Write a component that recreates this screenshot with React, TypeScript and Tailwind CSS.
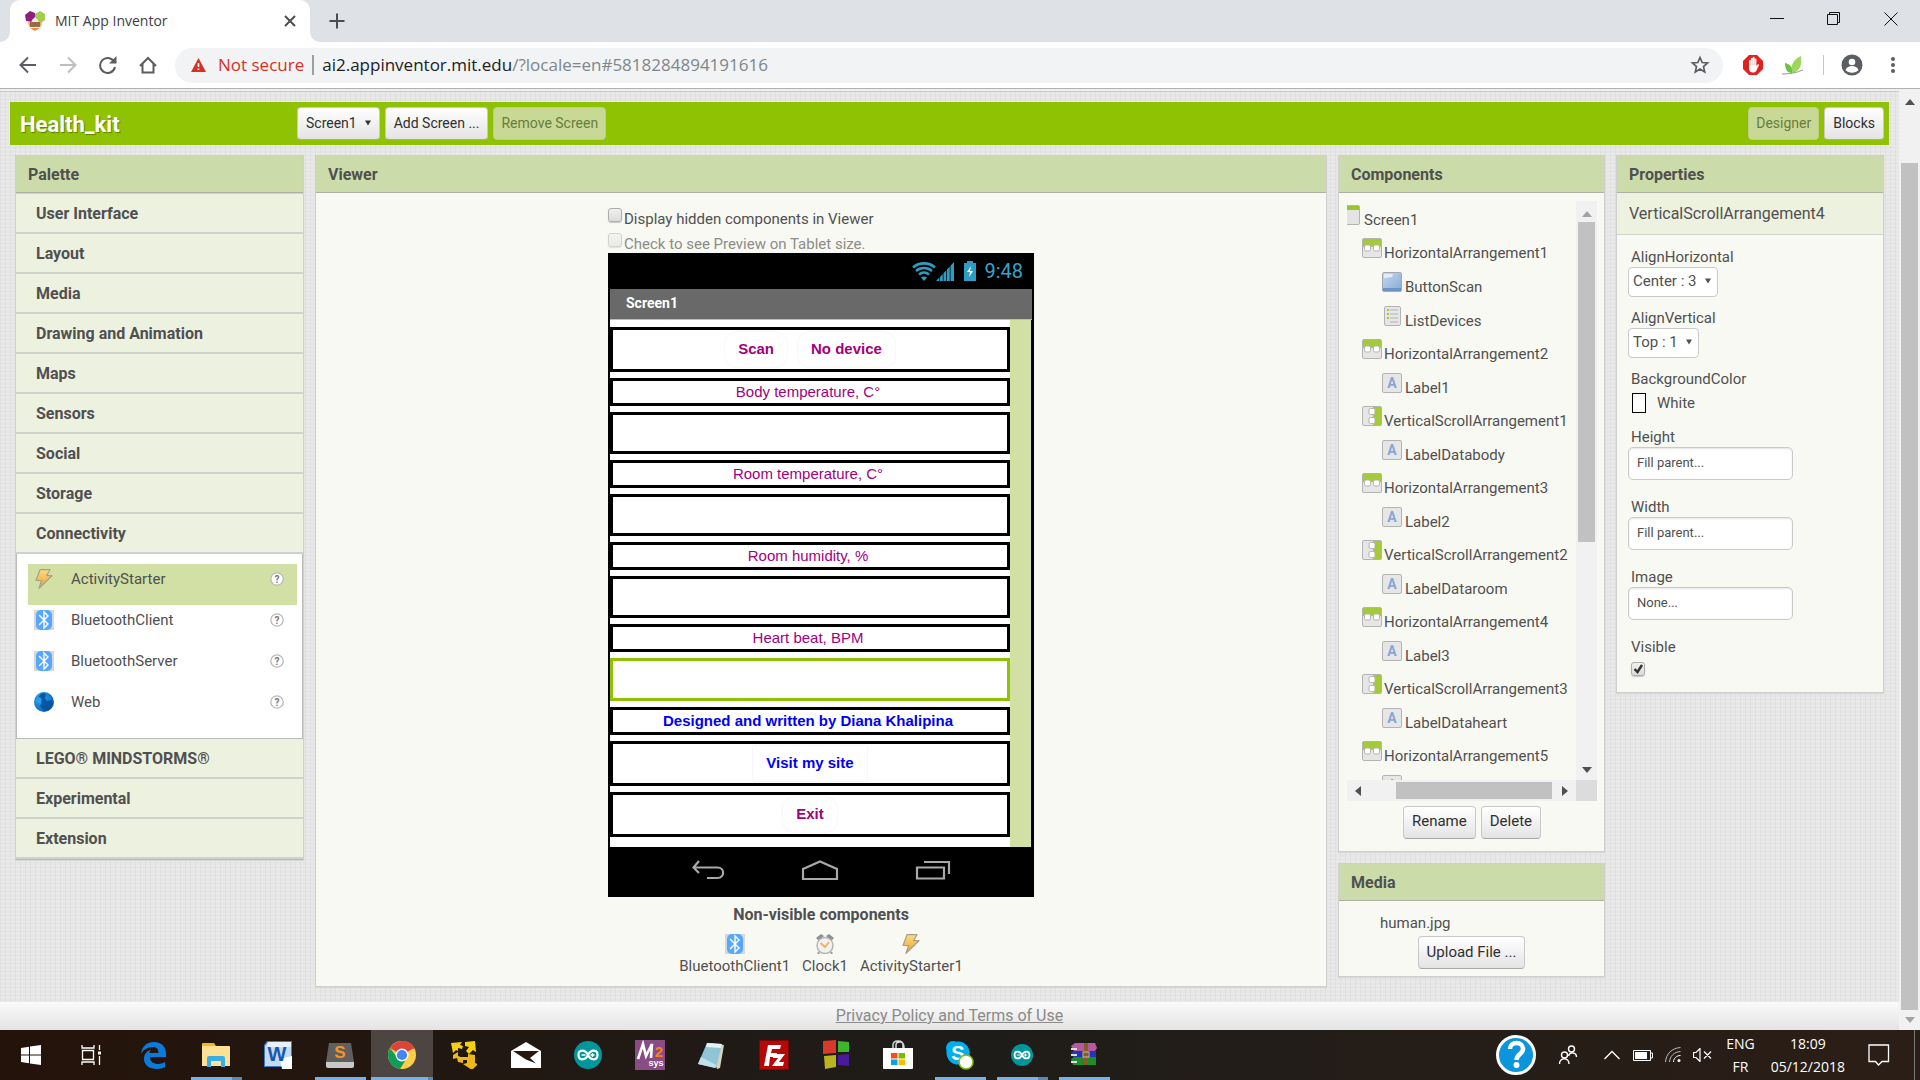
import type { ReactNode } from "react";

const categoriesTop = [
  "User Interface",
  "Layout",
  "Media",
  "Drawing and Animation",
  "Maps",
  "Sensors",
  "Social",
  "Storage",
  "Connectivity",
];

const categoriesBottom = ["LEGO® MINDSTORMS®", "Experimental", "Extension"];

/* ---------- component icons ---------- */

const BoltIcon = () => (
  <svg width="20" height="20" viewBox="0 0 20 20">
    <defs>
      <linearGradient id="bolt" x1="0" y1="0" x2="0" y2="1">
        <stop offset="0" stopColor="#fbdc86" />
        <stop offset="1" stopColor="#f0a024" />
      </linearGradient>
    </defs>
    <path
      d="M6 0.700h10l-3.500 6H18L5 19.300l2.500-7.800H2z"
      fill="url(#bolt)"
      stroke="#a9a08a"
      strokeWidth="1.200"
      strokeLinejoin="round"
    />
  </svg>
);

const BluetoothIcon = () => (
  <svg width="20" height="20" viewBox="0 0 20 20">
    <rect width="20" height="20" fill="#d8d8d8" />
    <rect x="2" width="16" height="20" rx="5" fill="#55a7ff" />
    <path
      d="M5 5l9 9-4 4V2l4 4-9 9"
      fill="none"
      stroke="#fff"
      strokeWidth="1.400"
    />
  </svg>
);

const GlobeIcon = () => (
  <svg width="20" height="20" viewBox="0 0 20 20">
    <defs>
      <radialGradient id="globe" cx="0.350" cy="0.350" r="0.700">
        <stop offset="0" stopColor="#35a8f2" />
        <stop offset="1" stopColor="#0763b8" />
      </radialGradient>
    </defs>
    <circle cx="10" cy="10" r="10" fill="url(#globe)" />
    <path
      d="M8 1l4 1-1 4 2 3 5-1 1 4-4 6-5 1-4-5 2-4-4-2 1-4z"
      fill="#044a98"
      opacity="0.800"
    />
    <path d="M3 6l3-1 2 3-2 3-4-1z" fill="#2f9ae8" />
  </svg>
);

const ClockIcon = () => (
  <svg width="20" height="20" viewBox="0 0 20 20">
    <path d="M1 4l5-4 3 2-5 5zM19 4l-5-4-3 2 5 5z" fill="#8f8f8f" />
    <path d="M4 18l-1 2M16 18l1 2" stroke="#999" strokeWidth="2" />
    <circle cx="10" cy="11.500" r="8" fill="#f1f1f1" stroke="#b5b5b5" strokeWidth="1.500" />
    <path d="M5.500 9l4.500 4 4-5" fill="none" stroke="#f0b45a" strokeWidth="2" />
  </svg>
);

const HelpIcon = () => (
  <svg width="14" height="14" viewBox="0 0 14 14">
    <circle cx="7" cy="7" r="6.200" fill="#fff" stroke="#b9b9b9" strokeWidth="1.300" />
    <text
      x="7"
      y="10.500"
      textAnchor="middle"
      fontSize="10"
      fontWeight="700"
      fontFamily="Roboto, sans-serif"
      fill="#777"
    >
      ?
    </text>
  </svg>
);

const IconFrame = ({ children, x = 0, width = 20 }: { children: ReactNode; x?: number; width?: number }) => (
  <svg width="20" height="20" viewBox="0 0 20 20" className="shrink-0">
    <rect x={x + 0.5} y="0.500" width={width - 1} height="19" rx="1.500" fill="#e6e6e6" stroke="#b3b3b3" />
    {children}
  </svg>
);

const HorizontalIcon = () => (
  <IconFrame>
    <rect x="1" y="1" width="18" height="8" fill="#a4c93a" />
    <rect x="2.500" y="7" width="6" height="6" rx="1.500" fill="#fff" stroke="#b5b5b5" />
    <rect x="11.500" y="7" width="6" height="6" rx="1.500" fill="#fff" stroke="#b5b5b5" />
  </IconFrame>
);

const VerticalIcon = () => (
  <IconFrame>
    <rect x="11" y="1" width="8" height="18" fill="#a4c93a" />
    <rect x="7" y="2.500" width="6" height="6" rx="1.500" fill="#fff" stroke="#b5b5b5" />
    <rect x="7" y="11.500" width="6" height="6" rx="1.500" fill="#fff" stroke="#b5b5b5" />
  </IconFrame>
);

const ButtonIcon = () => (
  <svg width="20" height="20" viewBox="0 0 20 20" className="shrink-0">
    <defs>
      <linearGradient id="btn" x1="0" y1="0" x2="1" y2="1">
        <stop offset="0" stopColor="#c5d8ef" />
        <stop offset="1" stopColor="#86a9d6" />
      </linearGradient>
    </defs>
    <rect x="0.500" y="0.500" width="19" height="19" rx="1.500" fill="url(#btn)" stroke="#a3a9b3" />
    <rect x="1" y="16" width="18" height="3" fill="#6f93c4" />
    <path d="M2 2h9l-1 3-8 1z" fill="#e4eefa" />
  </svg>
);

const ListIcon = () => (
  <IconFrame x={2} width={17}>
    <path d="M5 4h2M5 8h2M5 12h2" stroke="#a4c93a" strokeWidth="2" />
    <path d="M8 4h8M8 8h8M8 12h8M8 16h8" stroke="#b5b5b5" />
  </IconFrame>
);

const LabelIcon = () => (
  <IconFrame>
    <text
      x="10"
      y="15"
      textAnchor="middle"
      fontSize="14"
      fontWeight="700"
      fontFamily="Roboto, sans-serif"
      fill="#86a6d8"
    >
      A
    </text>
  </IconFrame>
);

const ScreenIcon = () => (
  <svg width="13" height="20" viewBox="0 0 13 20" className="shrink-0">
    <path d="M0 0.500h11a1.500 1.500 0 0 1 1.500 1.500v16a1.500 1.500 0 0 1-1.500 1.500H0" fill="#e4e4e4" stroke="#b3b3b3" />
    <rect y="1" width="12" height="4" fill="#9dc42f" />
  </svg>
);

/* ---------- shared pieces ---------- */

const Panel = ({ title, className, children }: { title: string; className?: string; children: ReactNode }) => (
  <section className={`border border-[#cfcfcf] bg-[#f8f9f3] shadow-[0_1px_1px_#d8d8d8] ${className ?? ""}`}>
    <h2 className="flex h-[37px] items-center border-b border-[#adb0a5] bg-[#cbdcaa] pt-0.5 pl-3 text-base font-bold">
      {title}
    </h2>
    {children}
  </section>
);

const btn =
  "h-[33px] rounded-[4px] border border-[#c9c9c9] border-b-[#a9a9a9] bg-linear-to-b from-white to-[#e4e4e4] px-2 pb-0.5 text-[#2f2f2f]";
const btnDisabled =
  "h-[33px] rounded-[4px] border border-[#bccf86] bg-[#c7d995] px-[7px] pb-0.5 text-[#6a7c3c]";

const Arrow = ({ d, color = "#505050" }: { d: string; color?: string }) => (
  <svg width="10" height="10" viewBox="0 0 10 10" className="shrink-0">
    <path d={d} fill={color} />
  </svg>
);
const UP = "M5 2l5 6H0z";
const DOWN = "M0 2h10L5 8z";
const LEFT = "M8 0v10L2 5z";
const RIGHT = "M2 0v10l6-5z";

/* ---------- browser ---------- */

const Browser = () => (
  <header className="font-['Open_Sans',sans-serif]">
    <div className="flex h-[42px] bg-[#dee1e6]">
      <div className="flex w-[10px] items-end bg-white">
        <div className="h-full w-full rounded-br-[10px] bg-[#dee1e6]" />
      </div>
      <div className="bg-[#dee1e6]">
        <div className="flex h-full w-[300px] items-center rounded-t-[10px] bg-white pr-[10px] pl-[15px]">
          <svg width="20" height="20" viewBox="0 0 20 20">
            <path d="M5 0l5 2v6l-3 3-6-1-1-6z" fill="#8e1f7d" />
            <path d="M15 0l5 3v6l-4 3-6-3V3z" fill="#a2cf4b" />
            <path d="M7 9l3-3 3 3 1 3H6z" fill="#f3ece8" />
            <path d="M3 10l3 2-2 5zM17 10l-3 2 2 5z" fill="#f3a56a" />
            <rect x="5" y="11" width="10" height="5" fill="#9c6a45" />
            <path d="M5 17h10l-5 3z" fill="#ef8b3c" />
          </svg>
          <span className="ml-[10px] flex-1 text-sm text-[#3c4043]">MIT App Inventor</span>
          <button aria-label="Close tab" className="p-1">
            <svg width="12" height="12" viewBox="0 0 12 12">
              <path d="M1 1l10 10M11 1L1 11" stroke="#4a4d51" strokeWidth="2" />
            </svg>
          </button>
        </div>
      </div>
      <div className="w-[10px] bg-white">
        <div className="h-full w-full rounded-bl-[10px] bg-[#dee1e6]" />
      </div>
      <button aria-label="New tab" className="ml-1 px-1">
        <svg width="18" height="18" viewBox="0 0 18 18">
          <path d="M9 1.500v15M1.500 9h15" stroke="#4a4d51" strokeWidth="2" />
        </svg>
      </button>
      <div className="flex-1" />
      <div className="flex h-[37px] items-center gap-[43px] pr-[22px]">
        <button aria-label="Minimize">
          <svg width="14" height="14" viewBox="0 0 14 14">
            <path d="M0 6.500h14" stroke="#111" />
          </svg>
        </button>
        <button aria-label="Restore">
          <svg width="14" height="14" viewBox="0 0 14 14" fill="none" stroke="#111">
            <path d="M0.500 2.500h10v10h-10zM2.500 2.500v-2h10v10h-2" />
          </svg>
        </button>
        <button aria-label="Close">
          <svg width="14" height="14" viewBox="0 0 14 14">
            <path d="M0.500 0.500l13 13M13.500 0.500l-13 13" stroke="#111" />
          </svg>
        </button>
      </div>
    </div>
    <div className="flex h-[47px] items-center border-b border-[#b0b1b3] bg-white pr-[25px] pl-[19px]">
      <div className="flex w-[156px] items-center gap-[22px]">
        <button aria-label="Back">
          <svg width="18" height="18" viewBox="0 0 18 18" fill="none" stroke="#5a5d61" strokeWidth="2">
            <path d="M17 9H2M9 1.500L1.500 9 9 16.500" />
          </svg>
        </button>
        <button aria-label="Forward">
          <svg width="18" height="18" viewBox="0 0 18 18" fill="none" stroke="#bcbec1" strokeWidth="2">
            <path d="M1 9h15M9 1.500L16.500 9 9 16.500" />
          </svg>
        </button>
        <button aria-label="Reload">
          <svg width="18" height="18" viewBox="0 0 18 18">
            <path d="M15 5.500A7.500 7.500 0 1 0 16 11" fill="none" stroke="#5a5d61" strokeWidth="2" />
            <path d="M17.500 0v7.500H10z" fill="#5a5d61" />
          </svg>
        </button>
        <button aria-label="Home">
          <svg width="18" height="18" viewBox="0 0 18 18" fill="none" stroke="#5a5d61" strokeWidth="2">
            <path d="M1 10L9 2l8 8M3.500 8v8.500h11V8" />
          </svg>
        </button>
      </div>
      <div className="flex h-[35px] flex-1 items-center rounded-full bg-[#f1f3f4] pr-[13px] pl-4 text-[17px]">
        <svg width="15" height="14" viewBox="0 0 15 14">
          <path d="M7.500 0L15 14H0z" fill="#d93025" />
          <path d="M7.500 5v4M7.500 10.500v1.500" stroke="#fff" strokeWidth="1.600" />
        </svg>
        <span className="ml-3 text-[#d93025]">Not secure</span>
        <span className="mx-2 h-5 w-0.5 bg-[#9aa0a6]" />
        <span className="text-[#202124]">
          ai2.appinventor.mit.edu<span className="text-[#80868b]">/?locale=en#5818284894191616</span>
        </span>
        <button aria-label="Bookmark this page" className="ml-auto">
          <svg width="20" height="20" viewBox="0 0 20 20" fill="none" stroke="#5a5d61" strokeWidth="1.700">
            <path d="M10 2.500l2.200 5 5.400.500-4.100 3.600 1.200 5.300L10 14.100l-4.700 2.800 1.200-5.300L2.400 8l5.400-.500z" />
          </svg>
        </button>
      </div>
      <svg width="20" height="20" viewBox="0 0 20 20" className="ml-5">
        <path d="M6 0h8l6 6v8l-6 6H6l-6-6V6z" fill="#e2211c" />
        <path
          d="M6 12V5.500a1 1 0 0 1 1.800 0V3.500a1 1 0 0 1 1.900 0v-1a1 1 0 0 1 1.900 0V4a1 1 0 0 1 1.800 0v7l1.200-1.500c.800-.800 1.700 0 1.200 1L13.500 15.500c-.800 1.500-1.800 2-3.500 2-2.500 0-4-1.500-4-4z"
          fill="#fff"
        />
        <path d="M7.900 5v5M9.700 4v6M11.600 4v6" stroke="#e8a09e" strokeWidth="0.500" />
      </svg>
      <svg width="22" height="20" viewBox="0 0 22 20" className="ml-[19px]">
        <path d="M19 1c1 8 0 15-9 17C8 10 12 4 19 1z" fill="#9bd85c" />
        <path d="M3 8c5 1 8 4 7 10-5 0-7-4-7-10z" fill="#6fc23f" />
        <path d="M0 19c6 0 14-1 21-4" fill="none" stroke="#999" />
      </svg>
      <span className="ml-[19px] h-5 w-px bg-[#c6c8cb]" />
      <svg width="22" height="22" viewBox="0 0 22 22" className="ml-[17px]">
        <circle cx="11" cy="11" r="10.500" fill="#5a5d61" />
        <circle cx="11" cy="8" r="3.300" fill="#fff" />
        <path d="M4.500 16c1-3 4-4 6.500-4s5.500 1 6.500 4c-3 3.500-10 3.500-13 0z" fill="#fff" />
      </svg>
      <button aria-label="Menu" className="ml-7">
        <svg width="4" height="18" viewBox="0 0 4 18" fill="#5a5d61">
          <circle cx="2" cy="3" r="2" />
          <circle cx="2" cy="9" r="2" />
          <circle cx="2" cy="15" r="2" />
        </svg>
      </button>
    </div>
  </header>
);

/* ---------- panels ---------- */

const Category = ({ name }: { name: string }) => (
  <button className="flex h-10 w-full items-center border-b-2 border-[#cfd1cb] bg-[#edf1e0] pt-0.5 pl-5 text-base font-bold">
    {name}
  </button>
);

const drawer = [
  { name: "ActivityStarter", icon: <BoltIcon />, active: true },
  { name: "BluetoothClient", icon: <BluetoothIcon /> },
  { name: "BluetoothServer", icon: <BluetoothIcon /> },
  { name: "Web", icon: <GlobeIcon /> },
];

const Palette = () => (
  <Panel title="Palette" className="w-[289px] shrink-0 border-b-[#b9bab5]">
    <div className="border-t border-[#cfd1cb]">
      {categoriesTop.map((c) => (
        <Category key={c} name={c} />
      ))}
      <ul className="border-x border-b border-[#bbbbbb] bg-white py-[10px] pr-[5px] pl-[11px] text-[15px]">
        {drawer.map((d) => (
          <li key={d.name} className={d.active ? "h-[41px] bg-[#d2e0a6] pt-[5px]" : "h-[41px] pt-[5px]"}>
            <div className="flex h-5 items-center pr-[13px] pl-[6px]">
              {d.icon}
              <span className="ml-[17px] flex-1">{d.name}</span>
              <HelpIcon />
            </div>
          </li>
        ))}
      </ul>
      {categoriesBottom.map((c) => (
        <Category key={c} name={c} />
      ))}
    </div>
  </Panel>
);

const Box = ({ className, children }: { className?: string; children?: ReactNode }) => (
  <div className={`flex items-center justify-center border-[3px] ${className ?? "border-black"}`}>{children}</div>
);

const Reading = ({ label, selected }: { label: string; selected?: boolean }) => (
  <>
    <Box className="h-7 border-black pr-1">{label}</Box>
    <Box className={selected ? "h-[43px] border-[#8fc202]" : "h-[42px] border-black"} />
  </>
);

const phoneBtn = "h-[35px] px-[13px] font-bold shadow-[0_0_2px_#e6e6e6]";

const Phone = () => (
  <div className="w-[426px] bg-black">
    <div className="flex h-9 items-center justify-end pr-[11px] text-[#33a5cf]">
      <svg width="24" height="19" viewBox="0 0 24 19" fill="none" stroke="#2f9cc4" strokeWidth="2.600">
        <path d="M1 5.500C7 0 17 0 23 5.500M4 9C8.500 5 15.500 5 20 9M7 12.500c3-2.500 7-2.500 10 0" />
        <path d="M9 15.500c2-1.500 4-1.500 6 0l-3 3.500z" fill="#2f9cc4" stroke="none" />
      </svg>
      <svg width="18" height="19" viewBox="0 0 18 19" fill="#2f9cc4">
        <path d="M0 19l3.300-3.500V19zM4 15l2.800-3v7H4zM7.500 11.200l2.800-3V19H7.500zM11 7.500l2.800-3V19H11zM14.500 3.700L18 0v19h-3.500z" />
      </svg>
      <svg width="12" height="20" viewBox="0 0 12 20" className="ml-[10px]">
        <path d="M3 0h6v2h3v18H0V2h3z" fill="#2f9cc4" />
        <path d="M7 5l-4 6h3l-1 5 4-6H6z" fill="#fff" />
      </svg>
      <span className="ml-2 text-[20px]">9:48</span>
    </div>
    <div className="mx-0.5 flex h-[31px] items-center border-b border-[#bdbdbd] bg-[#696969] pb-0.5 pl-4 text-sm font-bold text-white">
      Screen1
    </div>
    <div className="mr-[3px] ml-0.5 flex bg-[#d2e0a6]">
      <div className="flex flex-1 flex-col gap-[6px] bg-white pt-[7px] pb-[10px] font-['Liberation_Sans',sans-serif] text-[15px] text-[#a3007c]">
        <Box className="h-[45px] gap-[11px] border-black">
          <button className={`${phoneBtn} rounded-[12px]`}>Scan</button>
          <button className={`${phoneBtn} rounded-[12px]`}>No device</button>
        </Box>
        <Reading label="Body temperature, C°" />
        <Reading label="Room temperature, C°" />
        <Reading label="Room humidity, %" />
        <Reading label="Heart beat, BPM" selected />
        <Box className="h-7 border-black pr-1 font-bold text-[#0000f5]">Designed and written by Diana Khalipina</Box>
        <Box className="h-[45px] border-black">
          <button className={`${phoneBtn} text-[#0000f5]`}>Visit my site</button>
        </Box>
        <Box className="h-[45px] border-black">
          <button className={`${phoneBtn} rounded-[12px]`}>Exit</button>
        </Box>
      </div>
      <div className="w-[21px]" />
    </div>
    <div className="flex h-[50px] items-center justify-center gap-[76px] pb-1">
      <svg width="34" height="20" viewBox="0 0 34 20" fill="none" stroke="#a9a9a9" strokeWidth="2.200">
        <path d="M8 1L2.500 7.500 8 13M2.500 7.500h24c7.500 0 7.500 10.500 0 10.500H16" />
      </svg>
      <svg width="38" height="20" viewBox="0 0 38 20" fill="none" stroke="#a9a9a9" strokeWidth="2.200">
        <path d="M2 9l17-7.500L36 9v10H2z" />
      </svg>
      <svg width="36" height="20" viewBox="0 0 36 20" fill="none" stroke="#a9a9a9" strokeWidth="2.200">
        <path d="M2 7.500h27v11H2zM9 2h25v12" />
      </svg>
    </div>
  </div>
);

const hidden = [
  { name: "BluetoothClient1", icon: <BluetoothIcon /> },
  { name: "Clock1", icon: <ClockIcon /> },
  { name: "ActivityStarter1", icon: <BoltIcon /> },
];

const check =
  "size-[14px] appearance-none rounded-[3px] border border-[#adadad] bg-linear-to-b from-[#f0f0f0] to-[#dcdcdc] shadow-[0_1px_1px_#c9c9c9]";

const Viewer = () => (
  <Panel title="Viewer" className="min-w-0 flex-1">
    <div className="flex flex-col items-center pt-[10px] pb-2 text-[15px]">
      <div className="w-[426px]">
        <label className="flex h-[25px] gap-0.5 pt-[5px] leading-[22px]">
          <input type="checkbox" className={check} />
          Display hidden components in Viewer
        </label>
        <label className="flex h-[25px] gap-0.5 pt-[5px] leading-[22px] text-[#8c8c8a]">
          <input type="checkbox" disabled className={`${check} opacity-50`} />
          Check to see Preview on Tablet size.
        </label>
      </div>
      <Phone />
      <h3 className="mt-2 text-base leading-5 font-bold">Non-visible components</h3>
      <ul className="mt-[9px] flex gap-3">
        {hidden.map((h) => (
          <li key={h.name} className="flex flex-col items-center leading-6">
            {h.icon}
            {h.name}
          </li>
        ))}
      </ul>
    </div>
  </Panel>
);

const tree = [
  {
    name: "HorizontalArrangement1",
    icon: <HorizontalIcon />,
    items: [
      { name: "ButtonScan", icon: <ButtonIcon /> },
      { name: "ListDevices", icon: <ListIcon /> },
    ],
  },
  { name: "HorizontalArrangement2", icon: <HorizontalIcon />, items: [{ name: "Label1", icon: <LabelIcon /> }] },
  { name: "VerticalScrollArrangement1", icon: <VerticalIcon />, items: [{ name: "LabelDatabody", icon: <LabelIcon /> }] },
  { name: "HorizontalArrangement3", icon: <HorizontalIcon />, items: [{ name: "Label2", icon: <LabelIcon /> }] },
  { name: "VerticalScrollArrangement2", icon: <VerticalIcon />, items: [{ name: "LabelDataroom", icon: <LabelIcon /> }] },
  { name: "HorizontalArrangement4", icon: <HorizontalIcon />, items: [{ name: "Label3", icon: <LabelIcon /> }] },
  { name: "VerticalScrollArrangement3", icon: <VerticalIcon />, items: [{ name: "LabelDataheart", icon: <LabelIcon /> }] },
  { name: "HorizontalArrangement5", icon: <HorizontalIcon />, items: [{ name: "", icon: <LabelIcon /> }] },
];

const Components = () => (
  <Panel title="Components">
    <div className="pt-2 pr-[7px] pb-3 pl-2 text-[15px]">
      <div className="flex h-[579px]">
        <div className="min-w-0 flex-1 overflow-hidden pt-1 leading-[30px] whitespace-nowrap">
          <div className="flex h-[33px] gap-1">
            <ScreenIcon />
            Screen1
          </div>
          <ul className="pl-[15px]">
            {tree.map((node) => (
              <li key={node.name}>
                <div className="flex h-[34px] gap-0.5">
                  {node.icon}
                  {node.name}
                </div>
                <ul className="pl-5">
                  {node.items.map((leaf) => (
                    <li key={leaf.name} className="flex h-[34px] gap-[3px] last:h-[33px]">
                      {leaf.icon}
                      {leaf.name}
                    </li>
                  ))}
                </ul>
              </li>
            ))}
          </ul>
        </div>
        <div className="flex w-[21px] flex-col items-center bg-[#f1f1f1]">
          <div className="flex h-[21px] items-center pt-1">
            <Arrow d={UP} color="#a3a3a3" />
          </div>
          <div className="h-[320px] w-[17px] bg-[#c1c1c1]" />
          <div className="mt-auto flex h-[21px] items-center">
            <Arrow d={DOWN} />
          </div>
        </div>
      </div>
      <div className="flex h-[21px] bg-[#f1f1f1]">
        <div className="flex flex-1 items-center px-[6px]">
          <Arrow d={LEFT} />
          <div className="mr-2 ml-[33px] h-[17px] flex-1 bg-[#c1c1c1]" />
          <Arrow d={RIGHT} />
        </div>
        <div className="w-[21px] bg-[#dcdcdc]" />
      </div>
      <div className="flex justify-center gap-[5px] pt-[5px]">
        <button className={btn}>Rename</button>
        <button className={btn}>Delete</button>
      </div>
    </div>
  </Panel>
);

const Media = () => (
  <Panel title="Media">
    <div className="flex flex-col items-center gap-[3px] pt-3 pb-[7px] text-[15px] leading-5">
      <a href="#" className="self-start pl-[41px]">
        human.jpg
      </a>
      <button className={btn}>Upload File ...</button>
    </div>
  </Panel>
);

const Select = ({ label, value }: { label: string; value: string }) => (
  <div className="flex flex-col items-start pb-[11px]">
    <label htmlFor={label} className="pl-[3px]">
      {label}
    </label>
    <div className="flex h-[30px] items-center rounded-[4px] border border-[#cacaca] bg-white pr-[6px] pb-0.5 pl-1">
      <select id={label} className="mr-2 appearance-none outline-none">
        <option>{value}</option>
      </select>
      <svg width="6" height="6" viewBox="0 0 6 6">
        <path d="M0 0.500h6l-3 5z" fill="#505050" />
      </svg>
    </div>
  </div>
);

const Field = ({ label, value }: { label: string; value: string }) => (
  <div className="flex flex-col items-start pb-[17px]">
    <label htmlFor={label} className="pl-[3px]">
      {label}
    </label>
    <input
      id={label}
      defaultValue={value}
      className="h-[33px] w-[165px] rounded-[5px] border border-[#cacaca] bg-white px-2 pb-0.5 text-[13px] shadow-[inset_0_1px_2px_#e6e6e6] outline-none"
    />
  </div>
);

const Properties = () => (
  <Panel title="Properties" className="w-[268px] shrink-0">
    <div className="flex h-[42px] items-center border-b border-[#d0d2cc] bg-[#edf1e0] pl-3 text-base">
      VerticalScrollArrangement4
    </div>
    <div className="px-[11px] pt-3 pb-4 text-[15px] leading-5">
      <Select label="AlignHorizontal" value="Center : 3" />
      <Select label="AlignVertical" value="Top : 1" />
      <div className="pb-[11px] pl-[3px]">
        BackgroundColor
        <button className="flex h-[27px] items-center gap-[11px]">
          <span className="ml-px h-5 w-[14px] border border-black bg-white" />
          White
        </button>
      </div>
      <Field label="Height" value="Fill parent..." />
      <Field label="Width" value="Fill parent..." />
      <Field label="Image" value="None..." />
      <label className="flex flex-col gap-[5px] pl-[3px]">
        Visible
        <span className="grid w-[14px]">
          <input type="checkbox" defaultChecked className={`${check} peer col-start-1 row-start-1`} />
          <svg
            width="14"
            height="14"
            viewBox="0 0 14 14"
            className="pointer-events-none invisible col-start-1 row-start-1 peer-checked:visible"
          >
            <path d="M3.500 7l3 3 4.500-7" fill="none" stroke="#333" strokeWidth="2.400" />
          </svg>
        </span>
      </label>
    </div>
  </Panel>
);

/* ---------- taskbar ---------- */

const Arduino = ({ size }: { size: number }) => (
  <svg width={size} height={size} viewBox="0 0 28 28">
    <circle cx="14" cy="14" r="14" fill="#00979c" />
    <g fill="none" stroke="#fff" strokeWidth="2.200">
      <path d="M14 14c-3-6-9.500-5.500-9.500 0s6.500 6 9.500 0 9.500-5.500 9.500 0-6.500 6-9.500 0z" />
      <path d="M7.500 14h4M16.500 14h4M18.500 12v4" strokeWidth="1.300" />
    </g>
  </svg>
);

const tasks: { name: string; state?: "open" | "stacked" | "active"; icon: ReactNode }[] = [
  {
    name: "Start",
    icon: (
      <svg width="20" height="20" viewBox="0 0 20 20" fill="#fff">
        <path d="M0 3l8-1.200V9.500H0zM9 1.600L20 0v9.500H9zM0 10.500h8v7.700L0 17zM9 10.500h11V20L9 18.400z" />
      </svg>
    ),
  },
  {
    name: "Task view",
    icon: (
      <svg width="22" height="20" viewBox="0 0 22 20" fill="none" stroke="#fff" strokeWidth="1.300">
        <path d="M1.500 5.500h11v9h-11zM1 0v3h12V0M1 20v-3h12v3M18.500 0v5M18.500 11v9" />
        <rect x="17" y="6.500" width="3" height="3" fill="#fff" stroke="none" />
      </svg>
    ),
  },
  {
    name: "Edge",
    icon: (
      <svg width="26" height="28" viewBox="0 0 26 28">
        <path
          d="M0 13C1 5 6 1 13 1c8 0 12 5 12 12v3H9c0 5 4 7 8 7 3 0 5-1 7-2v5c-2 1-5 2-8 2C8 28 3 24 3 18c0-5 3-8 7-9.500-1 1-1.500 2.500-1.500 3.500h9c0-4-2-6-5.500-6C6 6 2 9 0 13z"
          fill="#0b7bdb"
        />
      </svg>
    ),
  },
  {
    name: "File Explorer",
    state: "stacked",
    icon: (
      <svg width="28" height="24" viewBox="0 0 28 24">
        <path d="M0 1q0-1 1-1h11l2 3H0z" fill="#f7b718" />
        <path d="M0 3h27q1 0 1 1v19H0z" fill="#fde293" />
        <path d="M5 24v-9q0-2 2-2h14q2 0 2 2v9h-4v-6H9v6z" fill="#3aaee6" />
      </svg>
    ),
  },
  {
    name: "Word",
    icon: (
      <svg width="28" height="28" viewBox="0 0 28 28">
        <path d="M3 0h25v26H0V4z" fill="#3f78c4" />
        <path d="M4 1h23v24H1V5z" fill="#c3dcf5" />
        <path d="M4 1h23v5H3z" fill="#e6f1fb" />
        <path d="M16 18l12-3v13H18z" fill="#fff" />
        <text x="13" y="20" textAnchor="middle" fontSize="20" fontWeight="700" fontFamily="Liberation Sans" fill="#1b57b0">
          W
        </text>
      </svg>
    ),
  },
  {
    name: "Sublime Text",
    state: "open",
    icon: (
      <svg width="28" height="26" viewBox="0 0 28 26">
        <path d="M3 1h22l3 19H0z" fill="#5f5f5f" />
        <path d="M0 20h28v4q0 2-2 2H2q-2 0-2-2z" fill="#c9c9c9" />
        <text x="14" y="16" textAnchor="middle" fontSize="17" fontWeight="700" fontFamily="Liberation Sans" fill="#f79420">
          S
        </text>
      </svg>
    ),
  },
  {
    name: "Chrome",
    state: "active",
    icon: (
      <svg width="28" height="28" viewBox="0 0 28 28">
        <circle cx="14" cy="14" r="14" fill="#ffcd46" />
        <path d="M14 14L1.900 7A14 14 0 0 1 26.100 7z" fill="#db4437" />
        <path d="M14 0a14 14 0 0 1 12.100 7.500H14z" fill="#db4437" />
        <path d="M1.900 7A14 14 0 0 0 12 27.900L19 17l-5 2-5-3z" fill="#0f9d58" />
        <circle cx="14" cy="14" r="6.500" fill="#fff" />
        <circle cx="14" cy="14" r="5.100" fill="#4285f4" />
      </svg>
    ),
  },
  {
    name: "Virtual machine",
    icon: (
      <svg width="26" height="28" viewBox="0 0 26 28" fill="#f5cf12">
        <path d="M0 2l11-1-2 3 3 1-1 3-4-1v3l-2-1-3 3zM14 1l10-1 1 11-3-2-4 4-3-3 3-4-4-1z" />
        <path d="M2 14l5-3v4l3 1v-4h3v4h4v-3l7 1v8l3 1-6 6-9-6 4-1v-3h-4v3l-5-1-1-4-4 1z" fill="#edb81a" />
        <path d="M9 12h5v4H9z" fill="#24150d" />
      </svg>
    ),
  },
  {
    name: "Mail",
    icon: (
      <svg width="30" height="26" viewBox="0 0 30 26">
        <path d="M0 9l15-9 15 9v17H0z" fill="#fff" />
        <path d="M2 9h26l-9 7 6 5.500-10-4z" fill="#26170f" />
      </svg>
    ),
  },
  { name: "Arduino", icon: <Arduino size={28} /> },
  {
    name: "MSYS2",
    icon: (
      <svg width="30" height="30" viewBox="0 0 30 30">
        <rect width="30" height="30" fill="#894c84" />
        <path d="M3 19L8 4l3 12 6-12-1 14" fill="none" stroke="#fff" strokeWidth="2.600" />
        <text x="24" y="17" textAnchor="middle" fontSize="15" fontWeight="700" fontFamily="Liberation Sans" fill="#f48024">
          2
        </text>
        <text x="21" y="26" textAnchor="middle" fontSize="9" fontWeight="700" fontFamily="Liberation Sans" fill="#fff">
          sys
        </text>
      </svg>
    ),
  },
  {
    name: "Notepad",
    icon: (
      <svg width="28" height="28" viewBox="0 0 28 28">
        <path d="M10 2l16 2-4 23-3 1z" fill="#d7d2bd" />
        <path d="M9 2l15 1-6 24-18-4z" fill="#8ec6d6" />
        <path d="M9 2l15 1-1 4-15-1z" fill="#e3f2f5" />
        <path d="M3 16l15 8-1 3-17-4z" fill="#c2e2ea" />
      </svg>
    ),
  },
  {
    name: "FileZilla",
    icon: (
      <svg width="30" height="30" viewBox="0 0 30 30">
        <rect x="0.500" y="0.500" width="29" height="29" fill="#b80707" stroke="#7d0505" strokeDasharray="2 1" />
        <path d="M5 26L9 5h13l-1 4h-8l-1 4h6l-1 4h-6l-1 9z" fill="#fff" />
        <path d="M15 14h11l-6 8h5l-1 4H13l6-8h-5z" fill="#fff" />
      </svg>
    ),
  },
  {
    name: "Start menu",
    icon: (
      <svg width="28" height="30" viewBox="0 0 28 30">
        <path d="M1 1l13-1v13L1 14z" fill="#d63a2a" />
        <path d="M16 1l11 1v10H16z" fill="#3fb52c" />
        <path d="M2 16l12-1v12L3 29z" fill="#b9b31f" />
        <path d="M16 15l11-1v12l-11-1z" fill="#4a1a9e" />
      </svg>
    ),
  },
  {
    name: "Store",
    icon: (
      <svg width="30" height="30" viewBox="0 0 30 30">
        <path d="M10 8V5q0-4 5-4t5 4v3M13 8V5q0-3 4-3t4 6" fill="none" stroke="#d9d9d9" strokeWidth="1.500" />
        <path d="M0 8h30v20q0 1-1 1H1q-1 0-1-1z" fill="#fff" />
        <path d="M8 13h6.500v5.500H8z" fill="#f25022" />
        <path d="M15.500 13H22v5.500h-6.500z" fill="#7fba00" />
        <path d="M8 19.500h6.500V25H8z" fill="#00a4ef" />
        <path d="M15.500 19.500H22V25h-6.500z" fill="#ffb900" />
      </svg>
    ),
  },
  {
    name: "Skype",
    state: "open",
    icon: (
      <svg width="30" height="30" viewBox="0 0 30 30">
        <circle cx="13" cy="13" r="11.500" fill="#00aff0" />
        <circle cx="8" cy="8" r="7" fill="#00aff0" />
        <circle cx="19" cy="19" r="7" fill="#00aff0" />
        <text x="13" y="20" textAnchor="middle" fontSize="20" fontWeight="700" fontFamily="Liberation Sans" fill="#fff">
          S
        </text>
        <circle cx="21" cy="22" r="7" fill="#fff" stroke="#7fba00" strokeWidth="1.500" />
      </svg>
    ),
  },
  { name: "Arduino IDE", state: "stacked", icon: <Arduino size={22} /> },
  {
    name: "WinRAR",
    state: "open",
    icon: (
      <svg width="28" height="24" viewBox="0 0 28 24">
        <path d="M1 3l4-3h20l2 5-2 3H4z" fill="#b45a9e" />
        <path d="M1 9l3-1h22v6H3z" fill="#2433b8" />
        <path d="M1 16l3-2h22v8H3z" fill="#1e8c28" />
        <path d="M1 6h6M1 12h6M1 19h6" stroke="#ddd" strokeWidth="2" />
        <path d="M14 0h4v22h-4z" fill="#8a5a2a" />
        <rect x="13" y="9" width="6" height="5" fill="none" stroke="#d8c27a" />
      </svg>
    ),
  },
];

const Taskbar = () => (
  <footer className="flex h-[50px] bg-linear-to-r from-[#24130a] via-[#1e1c19] to-[#2b1e16] font-['Open_Sans',sans-serif] text-sm text-white">
    {tasks.map((t) => (
      <button
        key={t.name}
        aria-label={t.name}
        className={`flex w-[62px] flex-col items-center justify-end first:w-[61px] ${t.state === "active" ? "bg-[#4c4541]" : ""}`}
      >
        <span className="flex flex-1 items-center pt-[2px]">{t.icon}</span>
        {t.state ? (
          <span className={`flex h-[3px] bg-[#76b2ea] ${t.state === "active" ? "w-full" : "w-[51px]"}`}>
            {t.state === "stacked" && <span className="ml-auto w-[10px] bg-[#5b89b3]" />}
            {t.state === "active" && <span className="ml-auto w-[5px] bg-[#5b89b3]" />}
          </span>
        ) : (
          <span className="h-[3px]" />
        )}
      </button>
    ))}
    <div className="ml-auto flex items-center">
      <svg width="40" height="40" viewBox="0 0 40 40">
        <circle cx="20" cy="20" r="18.500" fill="#0a95dc" stroke="#fff" strokeWidth="3" />
        <path d="M14 14c0-8 13-8 13 0 0 5-6.500 5-6.500 11" fill="none" stroke="#fff" strokeWidth="4.500" />
        <circle cx="20.500" cy="30" r="3" fill="#fff" />
      </svg>
      <svg width="20" height="20" viewBox="0 0 20 20" fill="none" stroke="#fff" strokeWidth="1.400" className="ml-[22px]">
        <circle cx="6.500" cy="10" r="3" />
        <path d="M1.500 19c0-7 9.500-7 9.500 0" />
        <circle cx="13.500" cy="4" r="3" />
        <path d="M10.500 11c1-4.500 8-4 8 1" />
      </svg>
      <svg width="16" height="10" viewBox="0 0 16 10" fill="none" stroke="#fff" strokeWidth="1.300" className="ml-[26px]">
        <path d="M0.500 9L8 1.500 15.500 9" />
      </svg>
      <svg width="20" height="11" viewBox="0 0 20 11" className="ml-[13px]">
        <path d="M0.500 0.500h17v10h-17zM18 3h1.500v5H18" fill="none" stroke="#fff" />
        <rect x="2" y="2" width="12" height="7" fill="#fff" />
      </svg>
      <svg width="16" height="16" viewBox="0 0 16 16" fill="none" stroke="#fff" className="ml-3">
        <path d="M0.500 15C1 7 7 1 15.500 0.500M4.500 15C5 9 9 5 15.500 4.500" stroke="#bbb" />
        <path d="M8.500 15c0-3.500 3-6.500 7-6.500" />
        <circle cx="14" cy="13.500" r="1.500" fill="#fff" stroke="none" />
      </svg>
      <svg width="19" height="14" viewBox="0 0 19 14" fill="none" stroke="#fff" strokeWidth="1.200" className="ml-3">
        <path d="M0.500 4.500h2.500l4-4v13l-4-4H0.500zM11 3.500l7 7M18 3.500l-7 7" />
      </svg>
      <div className="ml-[14px] flex flex-col items-center leading-[23px]">
        <span>ENG</span>
        <span>FR</span>
      </div>
      <div className="ml-4 flex flex-col items-center leading-[23px]">
        <time>18:09</time>
        <time>05/12/2018</time>
      </div>
      <svg width="22" height="22" viewBox="0 0 22 22" fill="none" stroke="#fff" strokeWidth="1.300" className="ml-[23px]">
        <path d="M1 1h19.500v16.500H14L10.500 21 7.500 17.500H1z" />
      </svg>
      <span className="ml-6 h-[50px] w-px bg-[#777]" />
      <span className="w-[5px]" />
    </div>
  </footer>
);

const weave =
  "bg-[#e6e6e6] bg-[image:repeating-linear-gradient(0deg,#ffffff33_0_1px,transparent_1px_4px),repeating-linear-gradient(90deg,#00000009_0_1px,transparent_1px_5px)]";

export default function App() {
  return (
    <div className="flex min-h-screen flex-col font-[Roboto,sans-serif] text-[#505050]">
      <Browser />
      <div className="flex flex-1">
        <div className={`flex min-w-0 flex-1 flex-col ${weave}`}>
          <div className="h-[3px] border-b border-[#c9c9c9] bg-[#f0f0f0]" />
          <div className="mx-[10px] mt-[10px] flex h-[43px] items-center gap-[5px] bg-[#8fc202] px-[5px] text-sm">
            <h1 className="w-[277px] pt-0.5 pl-[5px] text-[22px] font-bold text-white [text-shadow:1px_1px_1px_#5f8200]">
              Health_kit
            </h1>
            <button className={`${btn} flex items-center gap-2`}>
              Screen1
              <svg width="6" height="6" viewBox="0 0 6 6">
                <path d="M0 0.500h6l-3 5z" fill="#333" />
              </svg>
            </button>
            <button className={btn}>Add Screen ...</button>
            <button disabled className={btnDisabled}>
              Remove Screen
            </button>
            <button disabled className={`${btnDisabled} ml-auto`}>
              Designer
            </button>
            <button className={btn}>Blocks</button>
          </div>
          <main className="flex flex-1 items-start gap-[11px] p-[15px] pt-[10px]">
            <Palette />
            <Viewer />
            <div className="flex w-[267px] shrink-0 flex-col gap-[11px]">
              <Components />
              <Media />
            </div>
            <Properties />
          </main>
          <div className="flex h-7 items-center justify-center bg-linear-to-b from-[#fafafa] to-[#e4e4e4] text-base">
            <a href="#" className="text-[#8a8a8a] underline">
              Privacy Policy and Terms of Use
            </a>
          </div>
        </div>
        <div className="flex w-[21px] flex-col items-center bg-[#f1f1f1]">
          <div className="flex h-[21px] items-center pt-1">
            <Arrow d={UP} />
          </div>
          <div className="mt-[53px] w-[17px] flex-1 bg-[#c1c1c1]" />
          <div className="flex h-5 items-center">
            <Arrow d={DOWN} color="#a3a3a3" />
          </div>
        </div>
      </div>
      <Taskbar />
    </div>
  );
}
